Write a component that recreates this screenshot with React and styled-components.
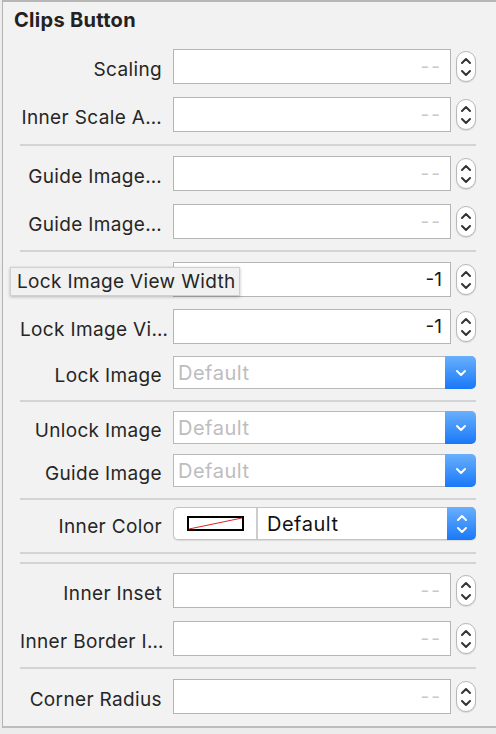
import React from "react";
import styled, { createGlobalStyle } from "styled-components";

const GlobalStyle = createGlobalStyle`
    body {
        margin: 0;
        background: #ececec;
        font-family: Inter, "Noto Sans", "Liberation Sans", sans-serif;
        color: #262626;
    }
`;

const Panel = styled.div`
    margin-left: 2px;
    width: 488px;
    height: 724px;
    background: #f2f2f2;
    border-top: 2px solid #b6b6b6;
    border-left: 1px solid #b3b3b3;
    border-right: 1px solid #d2d2d2;
    border-bottom: 2px solid #bdbdbd;
    padding-left: 17px;
`;

const Title = styled.div`
    height: 47px;
    box-sizing: border-box;
    padding-top: 7px;
    margin-left: -6px;
    font-size: 20px;
    font-weight: 700;
    letter-spacing: 0.3px;
    line-height: 22px;
    color: #222;
`;

const Section = styled.div`
    width: 456px;
    display: flex;
    flex-direction: column;
    gap: ${p => p.$gap || 13}px;
    padding-top: ${p => p.$top || 0}px;
    padding-bottom: ${p => p.$bottom || 0}px;
    min-height: ${p => p.$min || 0}px;
    border-bottom: ${p => (p.$last ? "none" : "2px solid #d4d4d4")};
`;

const Row = styled.div`
    position: relative;
    display: flex;
    align-items: center;
    height: ${p => p.$h || 35}px;
`;

const Label = styled.div`
    width: 142px;
    flex: none;
    margin-right: 11px;
    padding-top: 6px;
    text-align: right;
    white-space: nowrap;
    font-size: 19px;
    letter-spacing: 0.35px;
    color: #262626;
    visibility: ${p => (p.$hidden ? "hidden" : "visible")};
`;

const Field = styled.div`
    box-sizing: border-box;
    width: 279px;
    height: 35px;
    background: #fff;
    border: 1px solid #b5b5b5;
    display: flex;
    align-items: center;
    justify-content: flex-end;
    padding-right: 8px;
    font-size: 19px;
    color: ${p => (p.$empty ? "#c9c9c9" : "#1a1a1a")};
    letter-spacing: ${p => (p.$empty ? "2px" : "0")};
`;

const Stepper = styled.div`
    box-sizing: border-box;
    margin-left: 5px;
    width: 20px;
    height: 31px;
    background: #fff;
    border: 1px solid #b8b8b8;
    border-radius: 10px;
    box-shadow: 0 1px 1px rgba(0, 0, 0, 0.12);
    display: flex;
    align-items: center;
    justify-content: center;
`;

const Popup = styled.div`
    box-sizing: border-box;
    width: 306px;
    height: 33px;
    display: flex;
    background: #fff;
    border: 1px solid #b9b9b9;
    border-right: none;
    border-radius: 0 5px 5px 0;
`;

const PopupText = styled.div`
    flex: 1;
    display: flex;
    align-items: center;
    padding-left: ${p => (p.$muted ? 4 : 9)}px;
    font-size: 20px;
    letter-spacing: 0.5px;
    color: ${p => (p.$muted ? "#bdbdbd" : "#111")};
`;

const BlueButton = styled.div`
    width: ${p => p.$w || 31}px;
    margin: -1px 0;
    background: linear-gradient(#69b0fd, #1978f8);
    border-radius: 0 5px 5px 0;
    display: flex;
    align-items: center;
    justify-content: center;
`;

const ColorWell = styled.div`
    box-sizing: border-box;
    width: 304px;
    height: 33px;
    display: flex;
    background: #fff;
    border: 1px solid #c4c4c4;
    border-right: none;
    border-radius: 5px;
    box-shadow: 0 1px 1px rgba(0, 0, 0, 0.1);
`;

const Swatch = styled.div`
    width: 82px;
    flex: none;
    border-right: 2px solid #cdcdcd;
    display: flex;
    align-items: center;
    justify-content: center;
`;

const Tooltip = styled.div`
    position: absolute;
    left: -10px;
    top: 5px;
    box-sizing: border-box;
    width: 230px;
    height: 29px;
    padding-left: 6px;
    display: flex;
    align-items: center;
    background: #f1f1f1;
    border: 1px solid #d0d0d0;
    box-shadow: 0 1px 3px rgba(0, 0, 0, 0.25);
    font-size: 19px;
    letter-spacing: 0.35px;
    white-space: nowrap;
    color: #262626;
`;

const StepIcon = ({ color = "#333" }) => (
    <svg width="12" height="24" viewBox="0 0 12 24">
        <path d="M2 8 L6 4 L10 8" fill="none" stroke={color} strokeWidth="2" strokeLinecap="round" strokeLinejoin="round" />
        <path d="M2 16 L6 20 L10 16" fill="none" stroke={color} strokeWidth="2" strokeLinecap="round" strokeLinejoin="round" />
    </svg>
);

const DownIcon = () => (
    <svg width="12" height="8" viewBox="0 0 12 8">
        <path d="M2 2 L6 6 L10 2" fill="none" stroke="#fff" strokeWidth="2" strokeLinecap="round" strokeLinejoin="round" />
    </svg>
);

const NumberRow = ({ label, value }) => (
    <Row>
        <Label>{label}</Label>
        <Field $empty={!value}>{value || "--"}</Field>
        <Stepper>
            <StepIcon />
        </Stepper>
    </Row>
);

const PopupRow = ({ label }) => (
    <Row $h={33}>
        <Label>{label}</Label>
        <Popup>
            <PopupText $muted>Default</PopupText>
            <BlueButton>
                <DownIcon />
            </BlueButton>
        </Popup>
    </Row>
);

export default function App() {
    return (
        <>
            <GlobalStyle />
            <Panel>
                <Title>Clips Button</Title>
                <Section $bottom={12}>
                    <NumberRow label="Scaling" />
                    <NumberRow label="Inner Scale A…" />
                </Section>
                <Section $top={10} $bottom={11}>
                    <NumberRow label="Guide Image…" />
                    <NumberRow label="Guide Image…" />
                </Section>
                <Section $top={10} $bottom={11} $gap={12}>
                    <Row>
                        <Label $hidden aria-hidden="true" />
                        <Field>-1</Field>
                        <Stepper>
                            <StepIcon />
                        </Stepper>
                        <Tooltip>Lock Image View Width</Tooltip>
                    </Row>
                    <NumberRow label="Lock Image Vi…" value="-1" />
                    <PopupRow label="Lock Image" />
                </Section>
                <Section $top={9} $bottom={11} $gap={10}>
                    <PopupRow label="Unlock Image" />
                    <PopupRow label="Guide Image" />
                </Section>
                <Section $top={7} $bottom={12}>
                    <Row $h={33}>
                        <Label>Inner Color</Label>
                        <ColorWell>
                            <Swatch>
                                <svg width="57" height="15" viewBox="0 0 57 15">
                                    <rect x="1" y="1" width="55" height="13" fill="#fff" stroke="#000" strokeWidth="2" />
                                    <line x1="2" y1="13" x2="55" y2="2" stroke="#d22" strokeWidth="1" />
                                </svg>
                            </Swatch>
                            <PopupText>Default</PopupText>
                            <BlueButton $w={29}>
                                <StepIcon color="#fff" />
                            </BlueButton>
                        </ColorWell>
                    </Row>
                </Section>
                <Section $min={8} />
                <Section $top={9} $bottom={11}>
                    <NumberRow label="Inner Inset" />
                    <NumberRow label="Inner Border I…" />
                </Section>
                <Section $top={10} $last>
                    <NumberRow label="Corner Radius" />
                </Section>
            </Panel>
        </>
    );
}
